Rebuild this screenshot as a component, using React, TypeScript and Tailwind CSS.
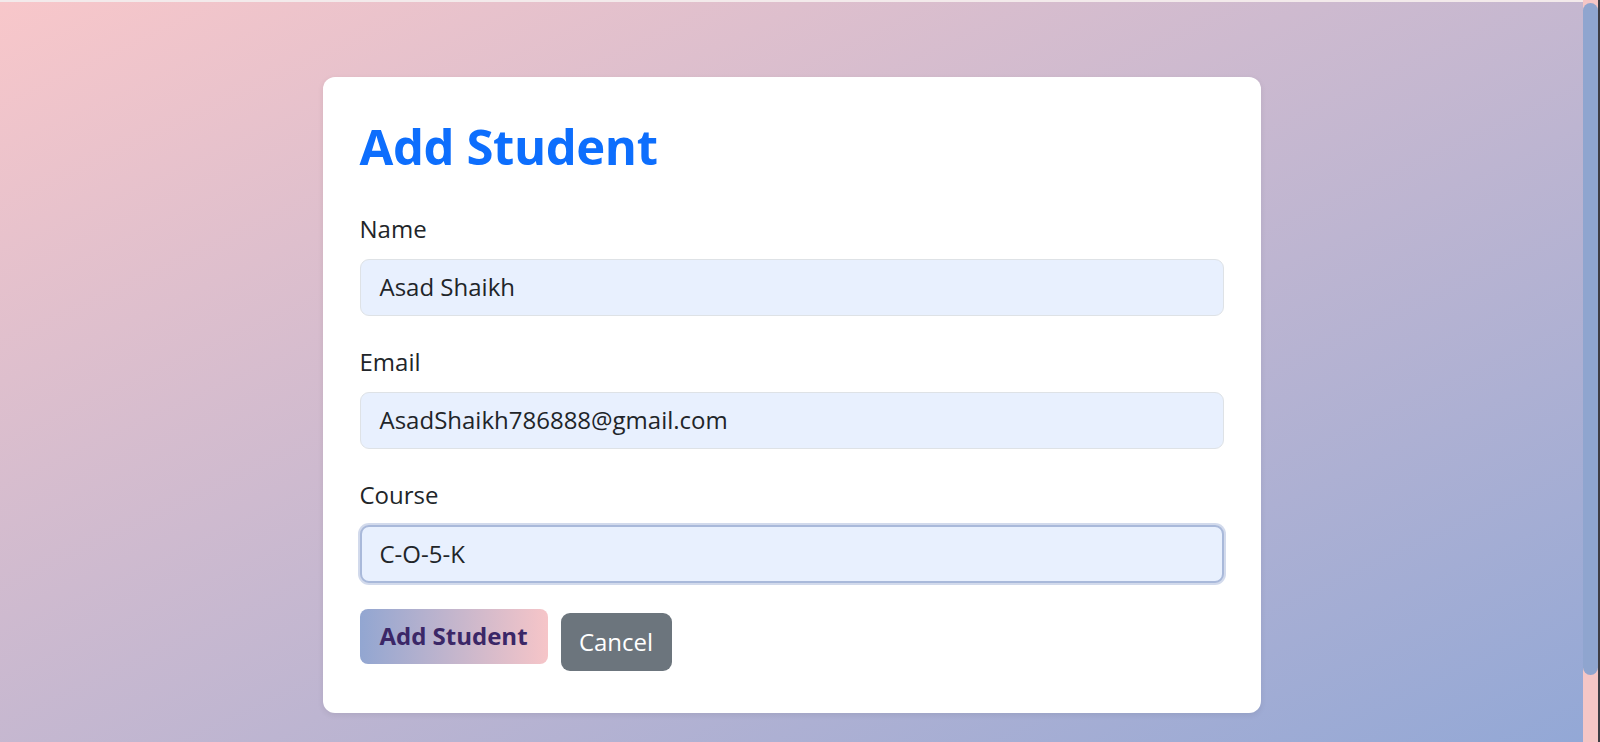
import React from "react";

const font = { fontFamily: '"Open Sans", "Noto Sans", sans-serif' };

export default function App() {
  return (
    <div className="flex h-screen w-full overflow-hidden" style={font}>
      <div className="flex flex-1 flex-col bg-[linear-gradient(to_bottom_right,#f8c7ca,#93a8d6)]">
        <div className="h-[2px] bg-[#f3eaeb]" />
        <div className="pt-[75px]">
          <div className="mx-auto w-[938px] rounded-[12px] bg-white px-[37px] pt-[40px] pb-[42px] shadow-[0_2px_6px_rgba(0,0,0,0.08)]">
            <h2 className="mb-[35px] text-[49px] leading-[1.2] font-bold tracking-[-0.4px] text-[#0d6efd]">
              Add Student
            </h2>

            <label className="mb-[12px] block text-[24px] leading-[36px] text-[#212529]">Name</label>
            <div className="flex h-[57px] w-full items-center rounded-[9px] border border-[#dee2e6] bg-[#e8f0fe] px-[19px] text-[24px] text-[#212529]">
              Asad Shaikh
            </div>

            <label className="mt-[28px] mb-[12px] block text-[24px] leading-[36px] text-[#212529]">Email</label>
            <div className="flex h-[57px] w-full items-center rounded-[9px] border border-[#dee2e6] bg-[#e8f0fe] px-[19px] text-[24px] text-[#212529]">
              AsadShaikh786888@gmail.com
            </div>

            <label className="mt-[28px] mb-[12px] block text-[24px] leading-[36px] text-[#212529]">Course</label>
            <div className="flex h-[58px] w-full items-center rounded-[9px] border-2 border-[#a9b9da] bg-[#e8f0fe] px-[18px] text-[24px] text-[#212529] shadow-[0_0_0_2px_rgba(180,194,224,0.6)]">
              C-O-5-K
            </div>

            <div className="mt-[26px] flex items-start gap-[13px]">
              <button className="h-[55px] w-[188px] rounded-[8px] bg-[linear-gradient(to_right,#92a6d1,#f6c5c8)] text-[24px] font-bold text-[#3b2767]">
                Add Student
              </button>
              <button className="mt-[4px] h-[58px] w-[111px] rounded-[9px] bg-[#6c757d] text-[24px] text-white">
                Cancel
              </button>
            </div>
          </div>
        </div>
      </div>
      <div className="flex w-[15px] flex-col bg-[#f5c6c6]">
        <div className="mt-[3px] h-[672px] rounded-[8px] bg-[#8fa5cf]" />
      </div>
      <div className="w-[2px] bg-[#3d3d44]" />
    </div>
  );
}
